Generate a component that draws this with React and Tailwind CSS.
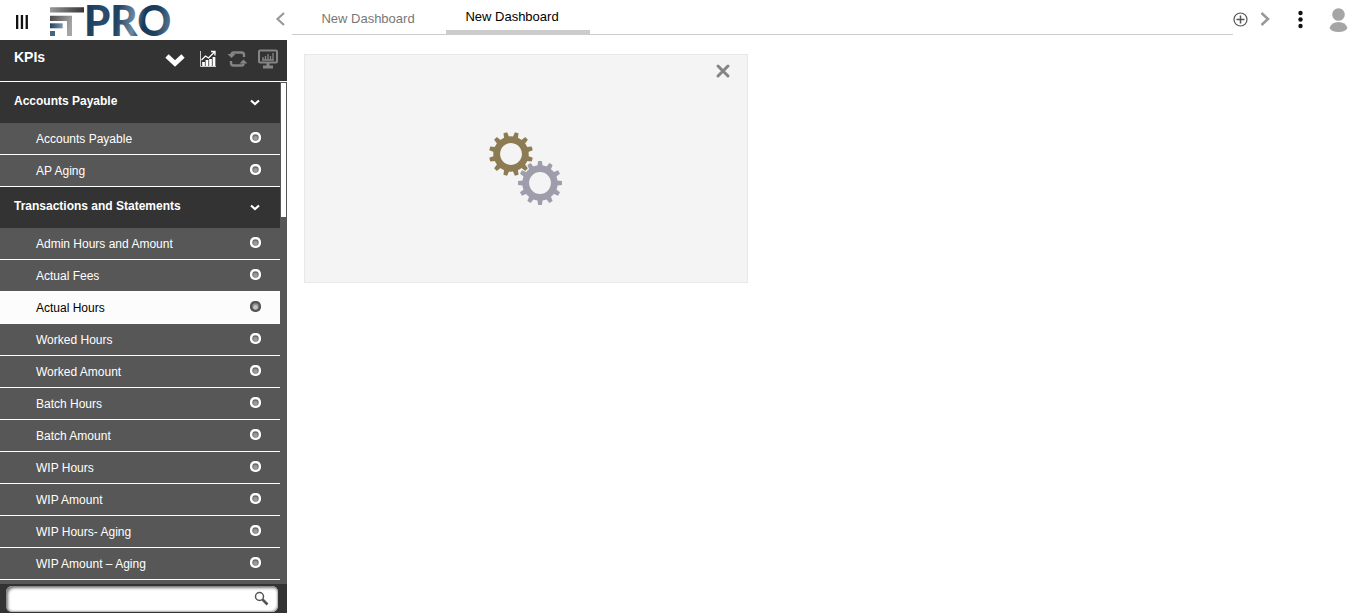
import React, { useState } from "react";

const groups = [
  { name: "Accounts Payable", items: ["Accounts Payable", "AP Aging"] },
  {
    name: "Transactions and Statements",
    items: [
      "Admin Hours and Amount",
      "Actual Fees",
      "Actual Hours",
      "Worked Hours",
      "Worked Amount",
      "Batch Hours",
      "Batch Amount",
      "WIP Hours",
      "WIP Amount",
      "WIP Hours- Aging",
      "WIP Amount – Aging",
    ],
  },
];

function Logo() {
  return (
    <svg width="124" height="34" viewBox="0 0 124 34" className="overflow-visible" role="img" aria-label="FT PRO">
      <defs>
        <linearGradient id="bar" x1="0" y1="0" x2="1" y2="0">
          <stop offset="0" stopColor="#98999b" />
          <stop offset="0.6" stopColor="#5d5a5a" />
          <stop offset="1" stopColor="#393536" />
        </linearGradient>
        <linearGradient id="stem" x1="0" y1="0" x2="1" y2="0.3">
          <stop offset="0" stopColor="#4b4849" />
          <stop offset="1" stopColor="#a5a5a6" />
        </linearGradient>
        <linearGradient id="blue" x1="0" y1="0" x2="1" y2="0">
          <stop offset="0" stopColor="#1d4266" />
          <stop offset="1" stopColor="#8297ac" />
        </linearGradient>
        <linearGradient id="word" gradientUnits="userSpaceOnUse" x1="37" y1="0" x2="121" y2="14">
          <stop offset="0" stopColor="#17395b" />
          <stop offset="0.22" stopColor="#2b4c6c" />
          <stop offset="0.38" stopColor="#204363" />
          <stop offset="0.58" stopColor="#6d88a2" />
          <stop offset="0.7" stopColor="#17395b" />
          <stop offset="0.85" stopColor="#1d4060" />
          <stop offset="1" stopColor="#54718e" />
        </linearGradient>
      </defs>
      <path d="M1 1.300h34v5.300H1z" fill="url(#bar)" />
      <path d="M1 9.700h22V30h-5V15H1z" fill="url(#stem)" />
      <path d="M1 17.300h12.700v5H1z" fill="url(#blue)" />
      <path d="M1 25h5v5H1z" fill="#47657f" />
      <text x="35" y="30" fontFamily="Lato, sans-serif" fontWeight="900" fontSize="42" fill="url(#word)">PRO</text>
    </svg>
  );
}

function Gear({ cx, cy, color, turn }) {
  return (
    <g transform={`translate(${cx} ${cy}) rotate(${turn})`}>
      <circle r="14.300" fill="none" stroke={color} strokeWidth="6.800" />
      {Array.from({ length: 12 }, (_, i) => (
        <path key={i} d="M-2.600 -17L-1.900 -22H1.900L2.600 -17z" fill={color} transform={`rotate(${i * 30})`} />
      ))}
    </g>
  );
}

function Kpi({ name, selected, onSelect }) {
  return (
    <button
      type="button"
      onClick={onSelect}
      className={`flex h-8 w-full items-center justify-between border-b border-white pl-9 pr-4 text-left text-xs ${
        selected ? "bg-[#fcfcfc] text-black" : "bg-[#575757] text-white"
      }`}
    >
      <span>{name}</span>
      <svg width="17" height="13" viewBox="0 0 17 13" aria-hidden="true">
        <rect x="3" y="0" width="11" height="11" rx="4.800" fill={selected ? "#555" : "#fff"} />
        <circle cx="8.500" cy="5.500" r="3.200" fill={selected ? "#8f8f8f" : "#6e6e6e"} />
        <circle cx="8.500" cy="6.200" r="2.200" fill={selected ? "#c4c4c4" : "#9a9a9a"} />
      </svg>
    </button>
  );
}

function Sidebar() {
  const [selected, setSelected] = useState("Actual Hours");
  return (
    <aside className="flex min-h-0 w-[287px] shrink-0 flex-col bg-[#333]">
      <div className="flex h-[42px] shrink-0 items-start border-b border-white pl-3.5">
        <h1 className="flex-1 pt-[7px] text-sm font-bold leading-5 text-white">KPIs</h1>
        <div className="flex items-center gap-2.5 pr-2 pt-2">
          <button type="button" aria-label="Collapse all" className="mr-0.5">
            <svg width="24" height="22" viewBox="0 0 24 22" fill="none" stroke="#fff" strokeWidth="4.800"><path d="M4 8l8 7.500L20 8" /></svg>
          </button>
          <button type="button" aria-label="Charts">
            <svg width="18" height="22" viewBox="0 0 18 22" fill="none" stroke="#fff">
              <path d="M1.500 3v15.500H17" stroke="#ccc" />
              <path d="M2.500 12l4-4 3 2 6-6M12 3.500h4v4" strokeWidth="1.300" />
              <path d="M4.500 18v-4M8 18v-6M11.500 18v-7M15 18V9" strokeWidth="2.700" />
            </svg>
          </button>
          <button type="button" aria-label="Refresh">
            <svg width="20" height="22" viewBox="0 0 20 22" fill="none" stroke="#858585" strokeWidth="2.400">
              <path d="M4.500 6.500Q4.500 4.500 6.500 4.500H14.500Q17 4.500 17 7v2M16.500 15.500q0 2-2 2H6.500Q4 17.500 4 15v-2" />
              <path d="M.5 6h8l-4 4zM12.500 15.500h8l-4-4z" fill="#858585" stroke="none" />
            </svg>
          </button>
          <button type="button" aria-label="Presentation">
            <svg width="22" height="22" viewBox="0 0 22 22" fill="none" stroke="#858585">
              <rect x="2" y="2.500" width="18" height="12" rx="1" strokeWidth="2" />
              <path d="M6 11.500V9M8.500 11.500V8M11 11.500V6M13.500 11.500V8M16 11.500V5M5 12h12" strokeWidth="1.300" />
              <path d="M11 15v4M6 19h10" strokeWidth="3" />
            </svg>
          </button>
        </div>
      </div>
      <div className="flex min-h-0 flex-1 bg-[#575757]">
        <nav aria-label="KPIs" className="min-w-0 flex-1 overflow-hidden">
          {groups.map((group) => (
            <section key={group.name}>
              <button type="button" className="flex h-[41px] w-full items-center justify-between bg-[#333] pb-1 pl-3.5 pr-5 text-left text-xs font-bold text-white">
                <span>{group.name}</span>
                <svg width="10" height="8" viewBox="0 0 10 8" className="mt-1" fill="none" stroke="#fff" strokeWidth="2.200"><path d="M1 1.500L5 5l4-3.500" /></svg>
              </button>
              {group.items.map((item) => (
                <Kpi key={item} name={item} selected={selected === item} onSelect={() => setSelected(item)} />
              ))}
            </section>
          ))}
        </nav>
        <div className="w-[7px] shrink-0 px-px" aria-hidden="true">
          <div className="mt-px h-[134px] bg-white" />
        </div>
      </div>
      <div className="h-[29px] shrink-0 px-1.5 pt-0.5">
        <label className="mr-[3px] flex h-[26px] items-center rounded-md bg-white pr-2 shadow-[inset_2px_2px_3px_#777,inset_-1px_-1px_2px_#aaa]">
          <input type="text" aria-label="Search KPIs" className="h-full min-w-0 flex-1 bg-transparent px-2 text-xs outline-none" />
          <svg width="16" height="16" viewBox="0 0 16 16" fill="none" stroke="#555"><circle cx="5.500" cy="5.500" r="4" strokeWidth="1.500" /><path d="M8.500 8.500l5 5" strokeWidth="2.600" /></svg>
        </label>
      </div>
    </aside>
  );
}

export default function App() {
  return (
    <div className="flex h-screen flex-col overflow-hidden bg-white font-['Liberation_Sans',sans-serif]">
      <header className="flex h-10 shrink-0 items-start">
        <div className="flex w-[292px] shrink-0 items-start pl-4 pt-1.5">
          <button type="button" aria-label="Menu" className="mr-5 mt-2">
            <svg width="13" height="16" viewBox="0 0 13 16"><path d="M0 1h2.300v14H0zM4.800 1h2.300v14H4.800zM9.600 1h2.300v14H9.600z" fill="#111" /></svg>
          </button>
          <Logo />
          <button type="button" aria-label="Previous tabs" className="ml-auto mr-1.5 mt-[5px]">
            <svg width="11" height="16" viewBox="0 0 11 16" fill="none" stroke="#999" strokeWidth="2.200"><path d="M9 2L2.500 8 9 14" /></svg>
          </button>
        </div>
        <div className="flex h-[35px] flex-1 items-start border-b border-[#ccc] text-[13px]" role="tablist">
          <button type="button" role="tab" aria-selected="false" className="h-[35px] w-[154px] pr-0.5 pt-0.5 text-[#777]">New Dashboard</button>
          <button type="button" role="tab" aria-selected="true" className="h-[34px] w-36 border-b-4 border-[#ccc] pr-3 pt-1 text-black">New Dashboard</button>
        </div>
        <div className="flex w-[133px] shrink-0 items-start pt-2">
          <button type="button" aria-label="Add dashboard" className="mt-1">
            <svg width="15" height="15" viewBox="0 0 15 15" fill="none" stroke="#555" strokeWidth="1.200"><circle cx="7.500" cy="7.500" r="6.500" /><path d="M7.500 3.500v8M3.500 7.500h8" strokeWidth="1.500" /></svg>
          </button>
          <button type="button" aria-label="Next tabs" className="ml-3 mt-[3px]">
            <svg width="10" height="16" viewBox="0 0 10 16" fill="none" stroke="#999" strokeWidth="2.500"><path d="M1.500 2L8 8l-6.500 6" /></svg>
          </button>
          <button type="button" aria-label="More options" className="ml-7 mt-0.5">
            <svg width="6" height="20" viewBox="0 0 6 20" fill="#111"><circle cx="2.500" cy="3" r="2.200" /><circle cx="2.500" cy="9.500" r="2.200" /><circle cx="2.500" cy="16" r="2.200" /></svg>
          </button>
          <button type="button" aria-label="Account" className="ml-6">
            <svg width="20" height="24" viewBox="0 0 20 24" fill="#a5a5a5"><circle cx="10.500" cy="6.500" r="6.300" /><path d="M1.500 20q2-6 9-6t9 6q-2 4-9 4t-9-4z" /></svg>
          </button>
        </div>
      </header>
      <div className="flex min-h-0 flex-1">
        <Sidebar />
        <main className="min-w-0 flex-1 pl-[17px] pt-3.5">
          <section aria-label="Loading widget" className="flex h-[229px] w-[444px] flex-col items-center border border-[#e8e8e8] bg-[#f4f4f4]">
            <button type="button" aria-label="Close" className="mr-4 mt-2 self-end">
              <svg width="16" height="16" viewBox="0 0 16 16" fill="none" stroke="#858585" strokeWidth="3" strokeLinecap="round"><path d="M3 3l10 10M13 3L3 13" /></svg>
            </button>
            <svg width="76" height="76" viewBox="0 0 76 76" className="mt-[52px]" role="img" aria-label="Loading">
              <Gear cx={23} cy={23} color="#8d7c53" turn={15} />
              <Gear cx={52} cy={52} color="#9f9dac" turn={0} />
            </svg>
          </section>
        </main>
      </div>
    </div>
  );
}
